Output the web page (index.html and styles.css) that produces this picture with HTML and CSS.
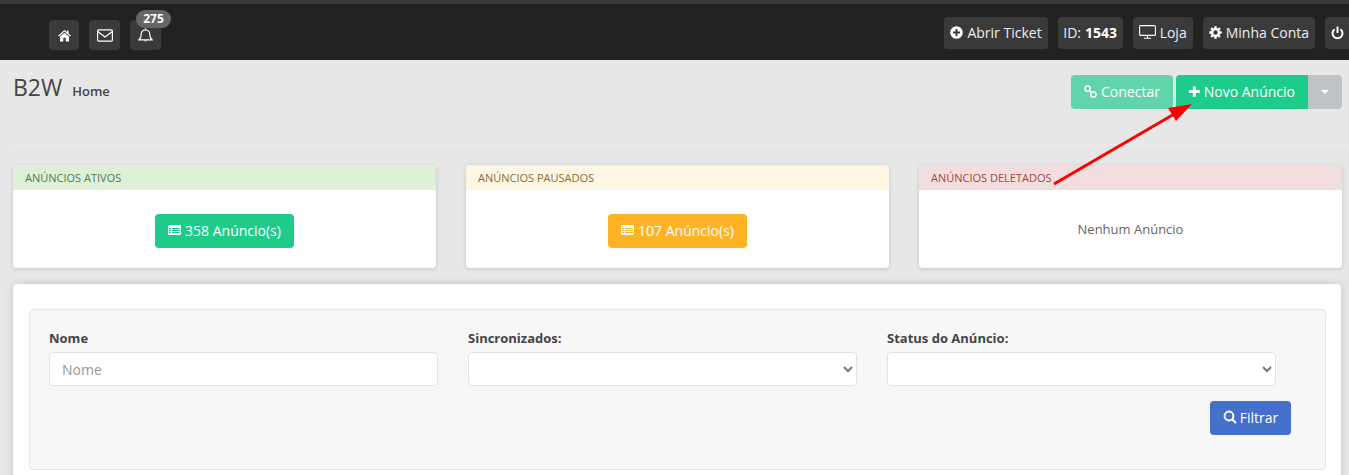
FILE: index.html
```html
<!DOCTYPE html>
<html lang="pt-BR">
<head>
  <meta charset="UTF-8">
  <title>B2W</title>
  <link rel="stylesheet" href="styles.css">
</head>
<body>
  <header class="topbar">
    <div class="topbar-left">
      <a class="top-btn icon-btn home-btn">
        <svg width="15" height="13" viewBox="0 0 14 13"><path fill="#fff" d="M7 1 L0.6 6.6 L1.4 7.5 L7 2.6 L12.6 7.5 L13.4 6.6 L11 4.4 V1.4 H9.4 V3 Z M2.5 7.6 V12.4 H5.8 V8.8 H8.2 V12.4 H11.5 V7.6 L7 3.8 Z"/></svg>
      </a>
      <a class="top-btn icon-btn mail-btn">
        <svg width="16" height="13" viewBox="0 0 16 13"><rect x="0.6" y="0.9" width="14.8" height="11.2" rx="1" fill="none" stroke="#fff" stroke-width="1.2"/><path d="M1 2.8 L8 8 L15 2.8" fill="none" stroke="#fff" stroke-width="1.2"/></svg>
      </a>
      <a class="top-btn icon-btn bell-btn">
        <svg width="15" height="15" viewBox="0 0 15 15"><path d="M1 11.8 C2.6 10.4 3.2 8.8 3.2 6.4 C3.2 3.8 5 2 7.5 2 C10 2 11.8 3.8 11.8 6.4 C11.8 8.8 12.4 10.4 14 11.8 Z" fill="none" stroke="#fff" stroke-width="1.2"/><path d="M6 12.4 A1.6 1.6 0 0 0 9 12.4 Z" fill="#fff"/><rect x="6.9" y="0.4" width="1.2" height="1.8" fill="#fff"/></svg>
        <span class="badge">275</span>
      </a>
    </div>
    <div class="topbar-right">
      <a class="top-btn">
        <svg width="13" height="13" viewBox="0 0 13 13"><circle cx="6.5" cy="6.5" r="6.3" fill="#fff"/><path d="M6.5 3 V10 M3 6.5 H10" stroke="#3a3a3a" stroke-width="2"/></svg>
        Abrir Ticket
      </a>
      <a class="top-btn id-btn">ID: <b>1543</b></a>
      <a class="top-btn">
        <svg width="17" height="14" viewBox="0 0 17 14"><rect x="0.6" y="0.6" width="15.8" height="9.8" rx="1" fill="none" stroke="#fff" stroke-width="1.1"/><path d="M8.5 10.5 V13 M5 13.2 H12" stroke="#fff" stroke-width="1.1"/></svg>
        Loja
      </a>
      <a class="top-btn">
        <svg width="13" height="13" viewBox="0 0 13 13"><circle cx="6.5" cy="6.5" r="3.4" fill="none" stroke="#fff" stroke-width="2.4"/><path d="M6.5 0.3 V2.5 M6.5 10.5 V12.7 M0.3 6.5 H2.5 M10.5 6.5 H12.7 M2.1 2.1 L3.7 3.7 M9.3 9.3 L10.9 10.9 M2.1 10.9 L3.7 9.3 M9.3 3.7 L10.9 2.1" stroke="#fff" stroke-width="2.4"/></svg>
        Minha Conta
      </a>
      <a class="top-btn power-btn">
        <svg width="13" height="14" viewBox="0 0 13 14"><path d="M3.6 3.2 A5 5 0 1 0 9.4 3.2" fill="none" stroke="#fff" stroke-width="2"/><path d="M6.5 0.6 V7" stroke="#fff" stroke-width="2"/></svg>
      </a>
    </div>
  </header>

  <main class="content">
    <div class="page-head">
      <div class="page-title">
        <h1>B2W</h1>
        <span>Home</span>
      </div>
      <div class="page-actions">
        <a class="btn btn-lite">
          <svg width="13" height="13" viewBox="0 0 13 13"><circle cx="3.6" cy="3.6" r="2.6" fill="none" stroke="#fff" stroke-width="1.5"/><circle cx="9.4" cy="9.4" r="2.6" fill="none" stroke="#fff" stroke-width="1.5"/><path d="M5.5 5.5 L7.5 7.5" stroke="#fff" stroke-width="1.5"/></svg>
          Conectar
        </a>
        <div class="btn-group">
          <a class="btn btn-green">
            <svg width="11" height="11" viewBox="0 0 11 11"><path d="M5.5 0 V11 M0 5.5 H11" stroke="#fff" stroke-width="3"/></svg>
            Novo Anúncio
          </a>
          <a class="btn btn-caret"><i></i></a>
        </div>
      </div>
    </div>

    <section class="cards">
      <article class="card">
        <div class="card-head head-green">ANÚNCIOS ATIVOS</div>
        <div class="card-body">
          <a class="btn btn-green">
            <svg class="list-icon" width="13" height="10" viewBox="0 0 13 10"><path fill="#fff" fill-rule="evenodd" d="M1 0 H12 A1 1 0 0 1 13 1 V9 A1 1 0 0 1 12 10 H1 A1 1 0 0 1 0 9 V1 A1 1 0 0 1 1 0 Z M1 3 V4 H3 V3 Z M4 3 V4 H12 V3 Z M1 5 V6 H3 V5 Z M4 5 V6 H12 V5 Z M1 7 V8 H3 V7 Z M4 7 V8 H12 V7 Z"/></svg>
            358 Anúncio(s)
          </a>
        </div>
      </article>
      <article class="card">
        <div class="card-head head-yellow">ANÚNCIOS PAUSADOS</div>
        <div class="card-body">
          <a class="btn btn-yellow">
            <svg class="list-icon" width="13" height="10" viewBox="0 0 13 10"><path fill="#fff" fill-rule="evenodd" d="M1 0 H12 A1 1 0 0 1 13 1 V9 A1 1 0 0 1 12 10 H1 A1 1 0 0 1 0 9 V1 A1 1 0 0 1 1 0 Z M1 3 V4 H3 V3 Z M4 3 V4 H12 V3 Z M1 5 V6 H3 V5 Z M4 5 V6 H12 V5 Z M1 7 V8 H3 V7 Z M4 7 V8 H12 V7 Z"/></svg>
            107 Anúncio(s)
          </a>
        </div>
      </article>
      <article class="card">
        <div class="card-head head-red">ANÚNCIOS DELETADOS</div>
        <div class="card-body empty">Nenhum Anúncio</div>
      </article>
    </section>

    <section class="panel">
      <form class="well">
        <div class="fields">
          <div class="field">
            <label>Nome</label>
            <input type="text" placeholder="Nome">
          </div>
          <div class="field">
            <label>Sincronizados:</label>
            <select></select>
          </div>
          <div class="field">
            <label>Status do Anúncio:</label>
            <select></select>
          </div>
        </div>
        <div class="well-actions">
          <a class="btn btn-blue">
            <svg width="14" height="14" viewBox="0 0 14 14"><circle cx="6" cy="6" r="4.4" fill="none" stroke="#fff" stroke-width="2"/><path d="M9.2 9.2 L13 13" stroke="#fff" stroke-width="2.2"/></svg>
            Filtrar
          </a>
        </div>
      </form>
    </section>
  </main>

  <!-- seta vermelha por cima da tela -->
  <svg class="arrow" width="1349" height="475" viewBox="0 0 1349 475">
    <path d="M1054 184 L1176 113" stroke="#f00" stroke-width="3" fill="none"/>
    <path d="M1192 104 L1168 108 L1176 121 Z" fill="#f00"/>
  </svg>
</body>
</html>
```

FILE: styles.css
```css
* {
  box-sizing: border-box;
}

html, body {
  height: 475px;
  overflow: hidden;
}

body {
  margin: 0;
  font-family: "Open Sans", sans-serif;
  font-size: 14px;
  color: #555;
  background: #e7e7e7;
}

.topbar {
  height: 60px;
  background: #222;
  border-top: 4px solid #3a3a3a;
  display: flex;
  align-items: flex-start;
  justify-content: space-between;
  padding-left: 49px;
  overflow: hidden;
}

.topbar-left {
  display: flex;
  gap: 10px;
  margin-top: 16px;
}

.topbar-right {
  display: flex;
  gap: 10px;
  margin-right: -24px;
  margin-top: 13px;
}

.top-btn {
  height: 32px;
  padding: 0 6px 2px;
  display: flex;
  align-items: center;
  gap: 4px;
  background: #3a3a3a;
  color: #eee;
  border-radius: 4px;
  white-space: nowrap;
}

.top-btn b {
  color: #fff;
}

.id-btn {
  width: 65px;
  justify-content: center;
  padding: 0 0 2px;
}

.icon-btn {
  width: 31px;
  height: 30px;
  padding: 0;
  justify-content: center;
  position: relative;
}

.home-btn {
  width: 30px;
}

.badge {
  position: absolute;
  top: -10px;
  left: 6px;
  width: 35px;
  height: 18px;
  border-radius: 9px;
  background: #666;
  color: #fff;
  font-size: 12px;
  font-weight: 700;
  line-height: 18px;
  text-align: center;
}

.power-btn {
  width: 48px;
  padding-bottom: 0;
}

.content {
  padding: 0 7px 0 13px;
}

.page-head {
  height: 85px;
  padding-top: 15px;
  display: flex;
  justify-content: space-between;
  align-items: flex-start;
  border-bottom: 1px solid #ececec;
  margin-right: -7px;
  padding-right: 7px;
}

.page-title {
  display: flex;
  align-items: baseline;
  gap: 10px;
  margin-top: -1px;
}

h1 {
  margin: 0;
  font-size: 23px;
  font-weight: 400;
  line-height: 27px;
  color: #444;
}

.page-title span {
  font-size: 13px;
  font-weight: 600;
  color: #444;
}

.page-actions {
  display: flex;
  gap: 3px;
}

.btn-group {
  display: flex;
}

.btn-group .btn-green {
  width: 132px;
  justify-content: center;
  border-radius: 4px 0 0 4px;
}

.btn {
  height: 34px;
  padding: 0 13px 2px;
  display: inline-flex;
  align-items: center;
  gap: 4px;
  border-radius: 4px;
  color: #fff;
  white-space: nowrap;
}

.btn-lite {
  background: #62d4ac;
  width: 102px;
}

.btn-green {
  background: #1dcb8b;
}

.btn-caret {
  width: 34px;
  padding: 0;
  justify-content: center;
  background: #bdc3c7;
  border-radius: 0 4px 4px 0;
}

.btn-caret i {
  border-top: 4px solid #fff;
  border-left: 4px solid transparent;
  border-right: 4px solid transparent;
}

.btn-yellow {
  background: #fdb323;
}

.btn-blue {
  background: #4470cb;
  width: 81px;
  padding: 0 0 2px;
  justify-content: center;
  gap: 3px;
}

.cards {
  display: grid;
  grid-template-columns: repeat(3, 423px);
  gap: 30px;
  margin-top: 20px;
}

.card {
  height: 103px;
  background: #fff;
  border-radius: 4px;
  box-shadow: 0 1px 4px rgba(0,0,0,0.15);
  overflow: hidden;
}

.card-head {
  height: 25px;
  padding: 0 12px;
  font-size: 11px;
  line-height: 25px;
}

.head-green {
  background: #dff0d8;
  color: #4f7a4f;
}

.head-yellow {
  background: #fcf6e2;
  color: #8a6d3b;
}

.head-red {
  background: #f2dede;
  color: #a94442;
}

.card-body {
  height: 78px;
  padding-top: 24px;
  display: flex;
  justify-content: center;
  align-items: flex-start;
}

.card-body .btn {
  width: 139px;
  justify-content: center;
}

.empty {
  font-size: 13px;
  color: #666;
  padding-top: 30px;
}

.panel {
  margin-top: 16px;
  height: 200px;
  width: 1328px;
  padding: 25px 15px;
  background: #fff;
  border-radius: 4px 4px 0 0;
  box-shadow: 0 0 8px rgba(0,0,0,0.15);
}

.well {
  height: 161px;
  padding: 19px 19px;
  background: #f7f7f7;
  border: 1px solid #e6e6e6;
  border-radius: 4px;
  margin-left: 1px;
}

.fields {
  display: grid;
  grid-template-columns: repeat(3, 389px);
  gap: 30px;
}

.field label {
  display: block;
  font-size: 13px;
  font-weight: 700;
  line-height: 18px;
  color: #444;
  margin-bottom: 5px;
}

.field input,
.field select {
  display: block;
  width: 100%;
  height: 34px;
  padding: 0 12px;
  font-family: inherit;
  font-size: 14px;
  color: #777;
  background: #fff;
  border: 1px solid #e2e2e2;
  border-radius: 4px;
}

.field input::placeholder {
  color: #999;
}

.well-actions {
  display: flex;
  justify-content: flex-end;
  margin-top: 15px;
  padding-right: 15px;
}

.arrow {
  position: absolute;
  top: 0;
  left: 0;
  pointer-events: none;
}
```
